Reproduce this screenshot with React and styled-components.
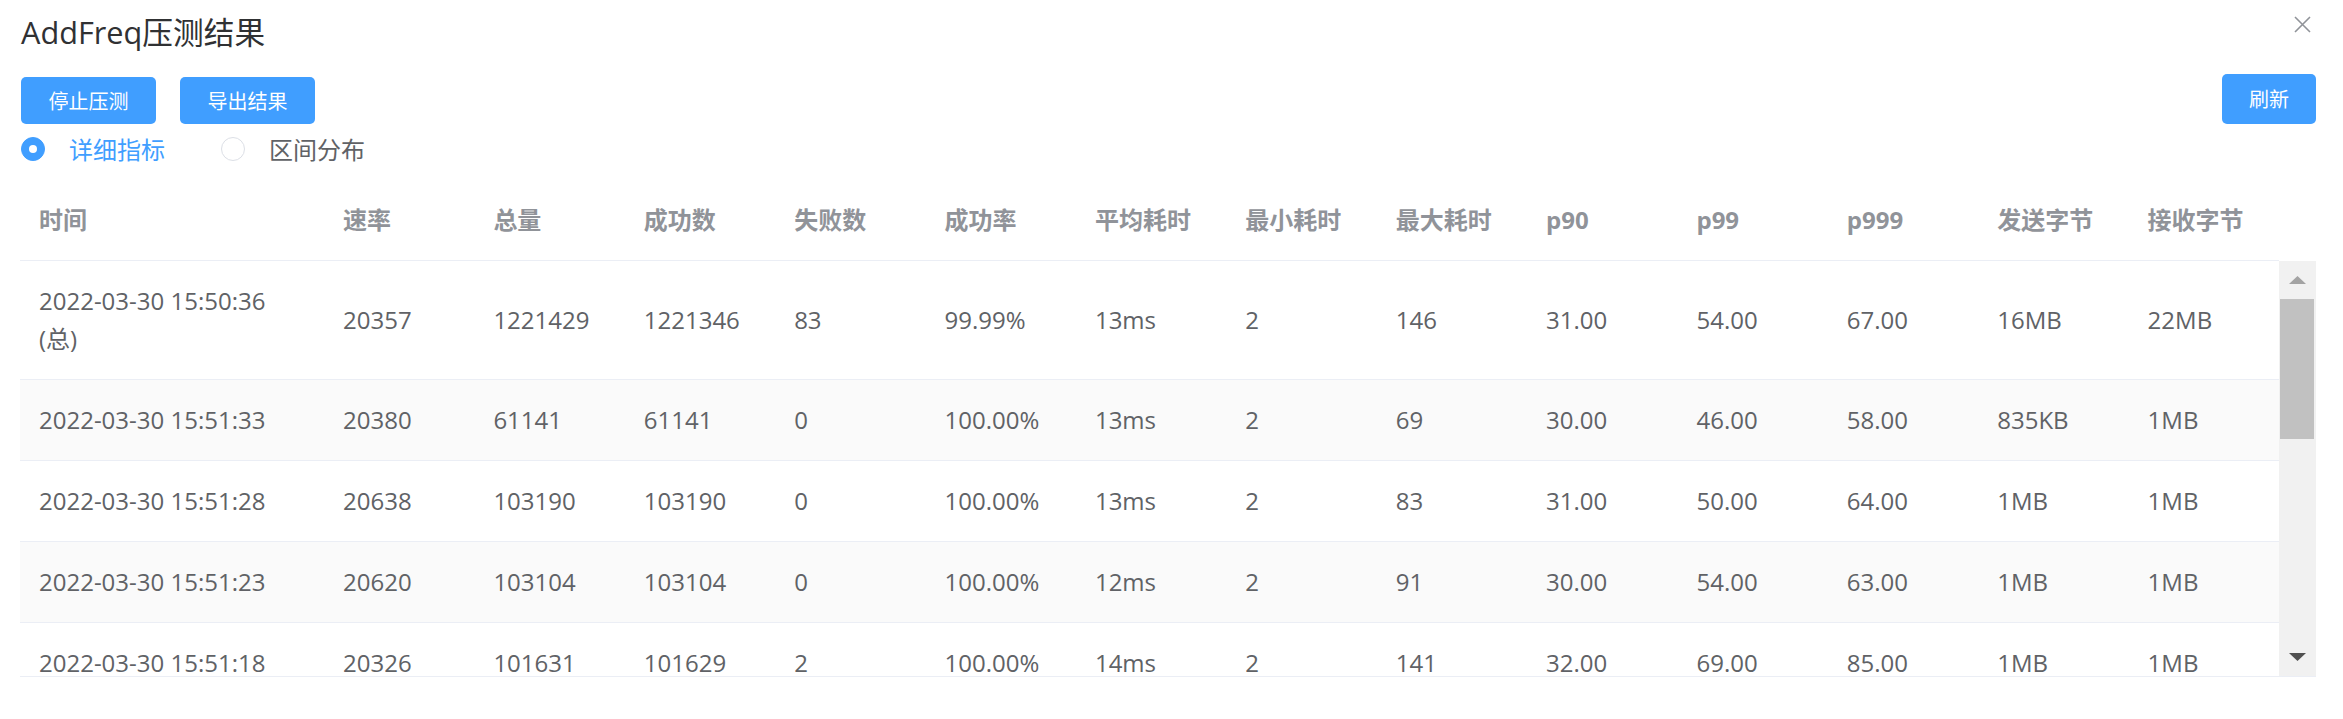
import React from 'react';
import styled, { createGlobalStyle } from 'styled-components';

const GlobalStyle = createGlobalStyle`
  html, body { margin: 0; padding: 0; background: #fff; }
  body { font-family: "Open Sans", "Noto Sans CJK SC", sans-serif; }
  * { box-sizing: border-box; }
`;

const Dialog = styled.div`
  position: relative;
  width: 2343px;
  padding: 12px 27px 0 20px;
`;

const Title = styled.h2`
  margin: 0 0 0 1px;
  font-size: 30.7px;
  line-height: 40px;
  font-weight: 400;
  color: #303133;
`;

const CloseButton = styled.button`
  position: absolute;
  top: 15px;
  right: 31px;
  width: 19px;
  height: 19px;
  padding: 0;
  border: 0;
  background: none;
  display: flex;
  align-items: center;
  justify-content: center;
  cursor: pointer;
`;

const Toolbar = styled.div`
  display: flex;
  align-items: flex-end;
  height: 50px;
  margin: 22px 0 0 1px;
`;

const ButtonGroup = styled.div`
  display: flex;
  gap: 24px;
`;

const Button = styled.button`
  height: ${p => (p.$tall ? 50 : 47)}px;
  padding: 0 ${p => (p.$tall ? 27 : 27.5)}px;
  margin-left: ${p => (p.$push ? 'auto' : '0')};
  border: 0;
  border-radius: 5px;
  background: #409eff;
  color: #fff;
  font-family: "Noto Sans CJK SC", sans-serif;
  font-size: 20px;
  line-height: 1;
  cursor: pointer;
`;

const RadioRow = styled.div`
  display: flex;
  align-items: center;
  height: 50px;
  margin-left: 1px;
`;

const RadioItem = styled.label`
  display: inline-flex;
  align-items: center;
  gap: 24px;
  margin-right: 56px;
  font-family: "Noto Sans CJK SC", sans-serif;
  font-size: 24px;
  line-height: 30px;
  color: ${p => (p.$checked ? '#409eff' : '#606266')};
  cursor: pointer;
`;

const RadioDot = styled.span`
  display: inline-flex;
  align-items: center;
  justify-content: center;
  width: 24px;
  height: 24px;
  border-radius: 50%;
  border: 1px solid ${p => (p.$checked ? '#409eff' : '#dcdfe6')};
  background: ${p => (p.$checked ? '#409eff' : '#fff')};
  &::after {
    content: '';
    width: 8px;
    height: 8px;
    border-radius: 50%;
    background: #fff;
    display: ${p => (p.$checked ? 'block' : 'none')};
  }
`;

const Table = styled.div`
  margin-top: 6px;
`;

const HeaderLine = styled.div`
  display: flex;
`;

const COLS = '304px repeat(13, 1fr)';

const HeaderRow = styled.div`
  flex: 1;
  display: grid;
  grid-template-columns: ${COLS};
  border-bottom: 1px solid #ebeef5;
`;

const HeaderCell = styled.div`
  padding: 21px 19px;
  line-height: 38px;
  font-size: 24px;
  font-weight: 700;
  color: #909399;
  white-space: nowrap;
`;

const Gutter = styled.div`
  width: 37px;
`;

const BodyWrap = styled.div`
  display: flex;
  border-bottom: 1px solid #ebeef5;
`;

const Viewport = styled.div`
  flex: 1;
  height: 415px;
  overflow: hidden;
`;

const Row = styled.div`
  display: grid;
  grid-template-columns: ${COLS};
  align-items: center;
  border-bottom: 1px solid #ebeef5;
  background: ${p => (p.$striped ? '#fafafa' : '#fff')};
`;

const Cell = styled.div`
  padding: 21px 19px;
  line-height: 38px;
  font-size: 24px;
  color: #606266;
`;

const ScrollTrack = styled.div`
  width: 37px;
  background: #f1f1f1;
  display: flex;
  flex-direction: column;
`;

const ScrollArrow = styled.div`
  height: 38px;
  display: flex;
  align-items: center;
  justify-content: center;
  flex: none;
`;

const ScrollThumb = styled.div`
  height: 140px;
  margin: 0 2px 0 1px;
  background: #c1c1c1;
  flex: none;
`;

const ScrollSpacer = styled.div`
  flex: 1;
`;

const headers = ['时间', '速率', '总量', '成功数', '失败数', '成功率', '平均耗时', '最小耗时', '最大耗时', 'p90', 'p99', 'p999', '发送字节', '接收字节'];

const rows = [
  ['2022-03-30 15:50:36 (总)', '20357', '1221429', '1221346', '83', '99.99%', '13ms', '2', '146', '31.00', '54.00', '67.00', '16MB', '22MB'],
  ['2022-03-30 15:51:33', '20380', '61141', '61141', '0', '100.00%', '13ms', '2', '69', '30.00', '46.00', '58.00', '835KB', '1MB'],
  ['2022-03-30 15:51:28', '20638', '103190', '103190', '0', '100.00%', '13ms', '2', '83', '31.00', '50.00', '64.00', '1MB', '1MB'],
  ['2022-03-30 15:51:23', '20620', '103104', '103104', '0', '100.00%', '12ms', '2', '91', '30.00', '54.00', '63.00', '1MB', '1MB'],
  ['2022-03-30 15:51:18', '20326', '101631', '101629', '2', '100.00%', '14ms', '2', '141', '32.00', '69.00', '85.00', '1MB', '1MB'],
  ['2022-03-30 15:51:13', '20411', '102057', '102057', '0', '100.00%', '13ms', '2', '77', '31.00', '52.00', '61.00', '1MB', '1MB'],
];

export default function App() {
  return (
    <Dialog>
      <GlobalStyle />
      <Title>AddFreq压测结果</Title>
      <CloseButton aria-label="close">
        <svg width="17" height="17" viewBox="0 0 17 17">
          <path d="M1 1 L16 16 M16 1 L1 16" stroke="#909399" strokeWidth="1.6" fill="none" />
        </svg>
      </CloseButton>
      <Toolbar>
        <ButtonGroup>
          <Button>停止压测</Button>
          <Button>导出结果</Button>
        </ButtonGroup>
        <Button $tall $push>刷新</Button>
      </Toolbar>
      <RadioRow>
        <RadioItem $checked>
          <RadioDot $checked />
          详细指标
        </RadioItem>
        <RadioItem>
          <RadioDot />
          区间分布
        </RadioItem>
      </RadioRow>
      <Table>
        <HeaderLine>
          <HeaderRow>
            {headers.map(h => (
              <HeaderCell key={h}>{h}</HeaderCell>
            ))}
          </HeaderRow>
          <Gutter />
        </HeaderLine>
        <BodyWrap>
          <Viewport>
            {rows.map((r, i) => (
              <Row key={i} $striped={i % 2 === 1}>
                {r.map((c, j) => (
                  <Cell key={j}>{c}</Cell>
                ))}
              </Row>
            ))}
          </Viewport>
          <ScrollTrack>
            <ScrollArrow>
              <svg width="17" height="8" viewBox="0 0 17 8">
                <path d="M8.5 0 L17 8 L0 8 Z" fill="#a3a3a3" />
              </svg>
            </ScrollArrow>
            <ScrollThumb />
            <ScrollSpacer />
            <ScrollArrow>
              <svg width="17" height="8" viewBox="0 0 17 8">
                <path d="M0 0 L17 0 L8.5 8 Z" fill="#505050" />
              </svg>
            </ScrollArrow>
          </ScrollTrack>
        </BodyWrap>
      </Table>
    </Dialog>
  );
}
